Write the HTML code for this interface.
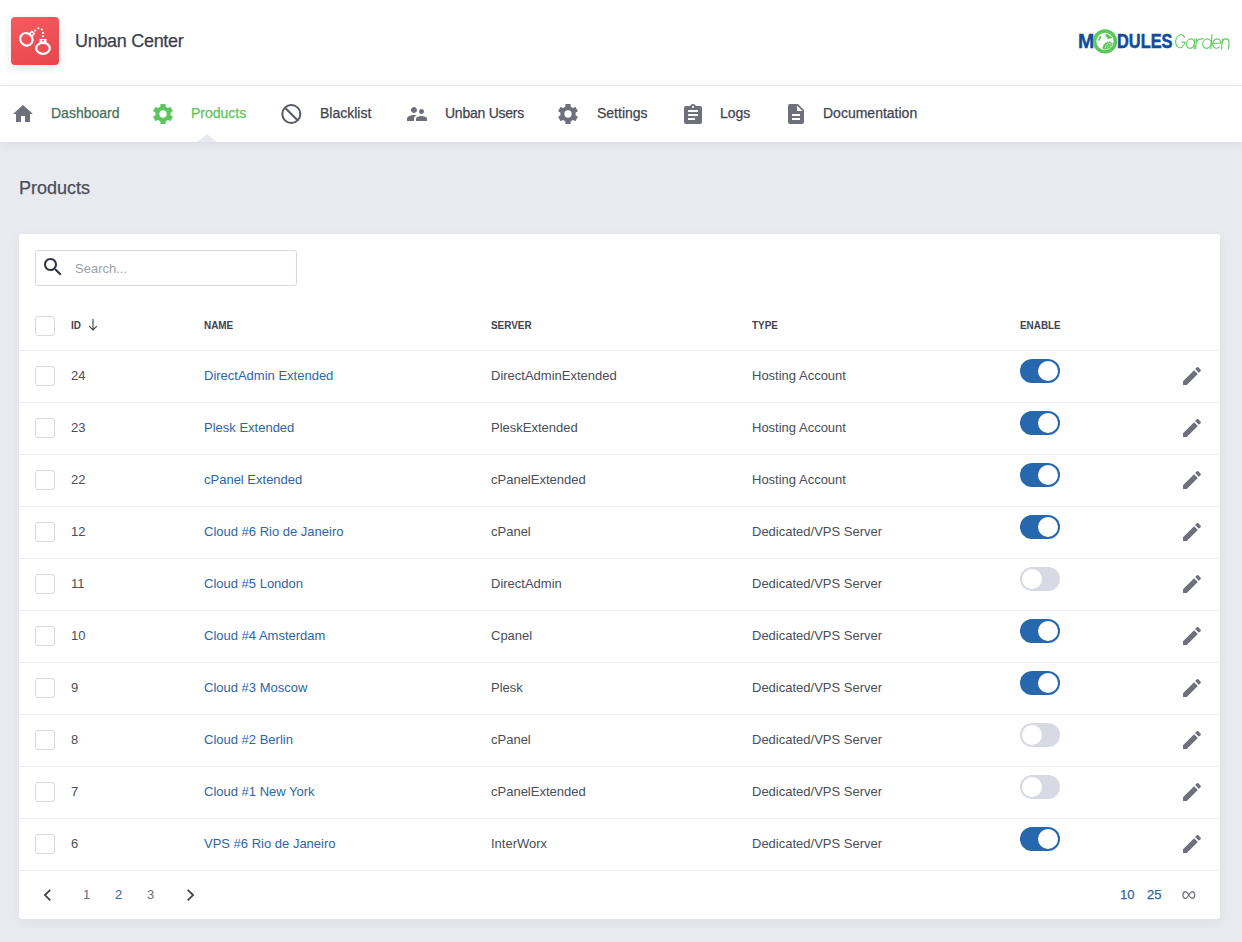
<!DOCTYPE html><html><head><meta charset="utf-8"><title>Unban Center</title><style>
*{box-sizing:border-box;margin:0;padding:0}
html,body{width:1242px;height:942px;overflow:hidden}
body{background:#e9eaef;font-family:"Liberation Sans",sans-serif;position:relative;color:#4a4e59}
.a{position:absolute;white-space:nowrap;line-height:1}
.hdr{position:absolute;left:0;top:0;width:1242px;height:85px;background:#fff}
.nav{position:absolute;left:0;top:85px;width:1242px;height:57px;background:#fff;border-top:1px solid #e8e9ee;box-shadow:0 2px 9px rgba(40,45,60,.07)}
.med{-webkit-text-stroke:0.25px currentColor}
.card{position:absolute;left:19px;top:234px;width:1201px;height:685px;background:#fff;border-radius:3px;box-shadow:0 3px 12px rgba(40,45,60,.06)}
.hline{position:absolute;left:19px;width:1201px;height:1px;background:#ebecf0}
.cb{position:absolute;left:35px;width:20px;height:20px;border:1px solid #d7dae4;border-radius:3px;background:#fff}
.th{font-size:11px;font-weight:700;color:#3f4350;transform:scaleX(.9);transform-origin:0 0}
.td{font-size:13px;color:#4a4e59}
.lnk{font-size:13px;color:#2d65a8}
.tg{position:absolute;left:1020px;width:40px;height:24px;border-radius:12px}
.tg.on{background:#2667ae}
.tg.off{background:#d8dae3}
.tg i{position:absolute;top:2px;width:20px;height:20px;border-radius:50%;background:#fff}
.tg.on i{left:18px}
.tg.off i{left:2px}
</style></head><body>
<div class="hdr"></div>
<div class="nav"></div>
<div class="a" style="left:11px;top:17px;width:48px;height:48px;border-radius:4px;background:linear-gradient(160deg,#f45b5f,#e7474b);box-shadow:0 3px 10px rgba(60,60,70,.12)"></div>
<svg class="a" style="left:11px;top:17px" width="48" height="48" viewBox="0 0 48 48"><g fill="none" stroke="#fff" stroke-width="2.2"><ellipse cx="15.4" cy="22.3" rx="6.5" ry="6.0" transform="rotate(50 15.4 22.3)"/><ellipse cx="32" cy="31.3" rx="6.8" ry="5.5"/></g><g fill="#fff"><rect x="18.5" y="14.3" width="4.8" height="4.8" transform="rotate(45 20.9 16.7)"/><rect x="28.6" y="21.9" width="6.9" height="3.9"/><circle cx="24" cy="13.5" r="1.05"/><circle cx="27.3" cy="11.25" r="1.05"/><circle cx="30.8" cy="12.5" r="1.05"/><circle cx="32" cy="15.9" r="1.05"/><circle cx="32" cy="19.3" r="1.05"/></g><circle cx="20.9" cy="16.7" r="1" fill="#ef5256"/><rect x="31.2" y="23" width="1.6" height="1.6" fill="#ef5256"/></svg>
<div class="a med" style="left:75px;top:31.76px;font-size:18px;color:#3b3f4b;letter-spacing:-0.3px">Unban Center</div>
<div class="a" style="left:1078px;top:31.89px;font-size:19.5px;font-weight:700;color:#0f4c9c;-webkit-text-stroke:.4px #0f4c9c">M</div>
<svg class="a" style="left:1092px;top:28px" width="26" height="27" viewBox="0 0 26 27"><circle cx="13" cy="13.4" r="10.4" fill="#fff" stroke="#5cc75c" stroke-width="3.5"/><g fill="#5cc75c"><path d="M7.6 7.9L9.1 8.6 8.7 10.6 7.2 12.9 6.2 12.3 6.6 10z"/><path d="M13.5 6.2L15.6 6 17.6 7.4 18.4 8.3 20.2 9.6 19.2 10.8 17.8 10.2 16.8 11.5 15.4 10.6 14.8 9 13.4 8.2z"/><path d="M10.4 20.4L10.8 18.6 11.4 17.6 11.3 16.4 12.6 16.1 13 14.6 14.5 14.7 15.3 13.4 16.7 14.1 18 13.2 18.7 14.5 20.7 14.8 20.2 17.2 18.5 19.7 15.9 21.1 12.8 21.5z"/></g><path d="M13.4 20.2A3.8 3.8 0 0 1 19.6 16.6M15.4 20.6A2.2 2.2 0 0 1 18.9 18.6" fill="none" stroke="#fff" stroke-width=".55"/></svg>
<div class="a" style="left:1117px;top:31.89px;font-size:19.5px;font-weight:700;color:#0f4c9c;-webkit-text-stroke:.5px #0f4c9c;transform:scaleX(.84);transform-origin:0 0">DULES</div>
<svg class="a" style="left:1170px;top:28px" width="66" height="26" viewBox="0 0 66 26"><g fill="none" stroke="#62c962" stroke-width="1.15" stroke-linecap="round" transform="translate(0 20.7) skewX(-5) translate(0 -20.7)"><path d="M13.6 9.2A4.75 6.6 0 1 0 14.45 14.3V14.1H11.3"/><ellipse cx="20" cy="15.6" rx="3.95" ry="4.7"/><path d="M24.05 10.9V20.7"/><path d="M25.65 20.7V10.9M25.65 15.2C25.9 12.2 28.5 10.7 32.3 10.9"/><ellipse cx="36.5" cy="15.6" rx="4.2" ry="4.7"/><path d="M40.8 6.6V20.7"/><path d="M41.95 15.2H50.4A4.1 4.7 0 1 0 49.2 18.9"/><path d="M51.55 20.7V10.9M51.55 15.3C51.55 12.4 53.2 10.8 55.1 10.8C57.1 10.8 58.5 12.4 58.5 15.3V20.7"/></g></svg>
<div class="a med" style="left:51px;top:106.05px;font-size:14px;color:#44705a">Dashboard</div>
<div class="a med" style="left:191px;top:106.05px;font-size:14px;color:#5cc45c">Products</div>
<div class="a med" style="left:320px;top:106.05px;font-size:14px;color:#3f4350">Blacklist</div>
<div class="a med" style="left:445px;top:106.05px;font-size:14px;color:#3f4350;letter-spacing:-0.25px">Unban Users</div>
<div class="a med" style="left:597px;top:106.05px;font-size:14px;color:#3f4350">Settings</div>
<div class="a med" style="left:720px;top:106.05px;font-size:14px;color:#3f4350">Logs</div>
<div class="a med" style="left:823px;top:106.05px;font-size:14px;color:#3f4350">Documentation</div>
<svg class="a" style="left:11px;top:102px" width="24" height="24" viewBox="0 0 24 24" fill="#6e717b"><path d="M10 20v-6h4v6h5v-8h3L12 3 2 12h3v8z"/></svg>
<svg class="a" style="left:153px;top:104px" width="20" height="20" viewBox="0 0 20 20"><g fill="#5cc65c"><circle cx="10" cy="10" r="7.7"/><rect x="7.4" y="0" width="5.2" height="20" transform="rotate(0 10 10)"/><rect x="7.4" y="0" width="5.2" height="20" transform="rotate(60 10 10)"/><rect x="7.4" y="0" width="5.2" height="20" transform="rotate(120 10 10)"/></g><circle cx="10" cy="10" r="3.65" fill="#fff"/></svg>
<svg class="a" style="left:281px;top:104px" width="21" height="20" viewBox="0 0 21 20"><circle cx="10.3" cy="10" r="9" fill="none" stroke="#555a66" stroke-width="2"/><line x1="4" y1="3.7" x2="16.6" y2="16.3" stroke="#555a66" stroke-width="2"/></svg>
<svg class="a" style="left:405px;top:102px" width="24" height="24" viewBox="0 0 24 24" fill="#6e717b"><path d="M16.5 12c1.38 0 2.49-1.12 2.49-2.5S17.88 7 16.5 7C15.12 7 14 8.12 14 9.5s1.12 2.5 2.5 2.5zM9 11c1.66 0 2.99-1.34 2.99-3S10.66 5 9 5C7.34 5 6 6.34 6 8s1.34 3 3 3zm7.5 3c-1.83 0-5.5.92-5.5 2.75V19h11v-2.25c0-1.83-3.670-2.75-5.5-2.75zM9 13c-2.33 0-7 1.17-7 3.5V19h7v-2.25c0-.85.33-2.34 2.37-3.47C10.5 13.1 9.66 13 9 13z"/></svg>
<svg class="a" style="left:558px;top:104px" width="20" height="20" viewBox="0 0 20 20"><g fill="#6e717b"><circle cx="10" cy="10" r="7.7"/><rect x="7.4" y="0" width="5.2" height="20" transform="rotate(0 10 10)"/><rect x="7.4" y="0" width="5.2" height="20" transform="rotate(60 10 10)"/><rect x="7.4" y="0" width="5.2" height="20" transform="rotate(120 10 10)"/></g><circle cx="10" cy="10" r="3.65" fill="#fff"/></svg>
<svg class="a" style="left:681px;top:103px" width="24" height="24" viewBox="0 0 24 24" fill="#6e717b"><path d="M19 3h-4.18C14.4 1.84 13.3 1 12 1c-1.3 0-2.4.84-2.82 2H5c-1.1 0-2 .9-2 2v14c0 1.1.9 2 2 2h14c1.1 0 2-.9 2-2V5c0-1.1-.9-2-2-2zm-7 0c.55 0 1 .45 1 1s-.45 1-1 1-1-.45-1-1 .45-1 1-1zm2 14H7v-2h7v2zm3-4H7v-2h10v2zm0-4H7V7h10v2z"/></svg>
<svg class="a" style="left:784px;top:102px" width="24" height="24" viewBox="0 0 24 24" fill="#6e717b"><path d="M14 2H6c-1.1 0-1.99.9-1.99 2L4 20c0 1.1.89 2 1.99 2H18c1.1 0 2-.9 2-2V8l-6-6zm2 16H8v-2h8v2zm0-4H8v-2h8v2zm-3-5V3.5L18.5 9H13z"/></svg>
<div class="a" style="left:197px;top:134px;width:0;height:0;border-left:10px solid transparent;border-right:10px solid transparent;border-bottom:8px solid #e9eaef"></div>
<div class="a med" style="left:19px;top:178.66px;font-size:18px;color:#4a4e58">Products</div>
<div class="card"></div>
<div class="a" style="left:35px;top:250px;width:262px;height:36px;border:1px solid #d6d9e1;border-radius:3px;background:#fff"></div>
<svg class="a" style="left:41px;top:255px" width="24" height="24" viewBox="0 0 24 24" fill="#2f3340"><path d="M15.5 14h-.79l-.28-.27C15.41 12.59 16 11.11 16 9.5 16 5.91 13.09 3 9.5 3S3 5.91 3 9.5 5.91 16 9.5 16c1.61 0 3.09-.59 4.23-1.57l.27.28v.79l5 4.99L20.49 19l-4.99-5zm-6 0C7.01 14 5 11.99 5 9.5S7.01 5 9.5 5 14 7.01 14 9.5 11.99 14 9.5 14z"/></svg>
<div class="a" style="left:75px;top:261.9px;font-size:13px;color:#9ba0ad">Search...</div>
<div class="cb" style="top:316px"></div>
<div class="a th" style="left:71px;top:319.59px">ID</div>
<div class="a th" style="left:204px;top:319.59px">NAME</div>
<div class="a th" style="left:491px;top:319.59px">SERVER</div>
<div class="a th" style="left:752px;top:319.59px">TYPE</div>
<div class="a th" style="left:1020px;top:319.59px">ENABLE</div>
<svg class="a" style="left:88px;top:318px" width="10" height="13" viewBox="0 0 10 13"><path d="M5 1v11M1.2 8.2L5 12l3.8-3.8" fill="none" stroke="#3f4350" stroke-width="1.1"/></svg>
<div class="hline" style="top:350px"></div>
<div class="cb" style="top:366px"></div>
<div class="a td" style="left:71px;top:368.6px">24</div>
<div class="a lnk" style="left:204px;top:368.6px">DirectAdmin Extended</div>
<div class="a td" style="left:491px;top:368.6px">DirectAdminExtended</div>
<div class="a td" style="left:752px;top:368.6px">Hosting Account</div>
<div class="tg on" style="top:359px"><i></i></div>
<svg class="a" style="left:1179.5px;top:364px" width="24" height="24" viewBox="0 0 24 24" fill="#6e717b"><path d="M3 17.25V21h3.75L17.81 9.94l-3.75-3.75L3 17.25zM20.71 7.04c.39-.39.39-1.02 0-1.41l-2.34-2.34c-.39-.39-1.02-.39-1.41 0l-1.83 1.83 3.75 3.75 1.83-1.83z"/></svg>
<div class="hline" style="top:402px"></div>
<div class="cb" style="top:418px"></div>
<div class="a td" style="left:71px;top:420.6px">23</div>
<div class="a lnk" style="left:204px;top:420.6px">Plesk Extended</div>
<div class="a td" style="left:491px;top:420.6px">PleskExtended</div>
<div class="a td" style="left:752px;top:420.6px">Hosting Account</div>
<div class="tg on" style="top:411px"><i></i></div>
<svg class="a" style="left:1179.5px;top:416px" width="24" height="24" viewBox="0 0 24 24" fill="#6e717b"><path d="M3 17.25V21h3.75L17.81 9.94l-3.75-3.75L3 17.25zM20.71 7.04c.39-.39.39-1.02 0-1.41l-2.34-2.34c-.39-.39-1.02-.39-1.41 0l-1.83 1.83 3.75 3.75 1.83-1.83z"/></svg>
<div class="hline" style="top:454px"></div>
<div class="cb" style="top:470px"></div>
<div class="a td" style="left:71px;top:472.6px">22</div>
<div class="a lnk" style="left:204px;top:472.6px">cPanel Extended</div>
<div class="a td" style="left:491px;top:472.6px">cPanelExtended</div>
<div class="a td" style="left:752px;top:472.6px">Hosting Account</div>
<div class="tg on" style="top:463px"><i></i></div>
<svg class="a" style="left:1179.5px;top:468px" width="24" height="24" viewBox="0 0 24 24" fill="#6e717b"><path d="M3 17.25V21h3.75L17.81 9.94l-3.75-3.75L3 17.25zM20.71 7.04c.39-.39.39-1.02 0-1.41l-2.34-2.34c-.39-.39-1.02-.39-1.41 0l-1.83 1.83 3.75 3.75 1.83-1.83z"/></svg>
<div class="hline" style="top:506px"></div>
<div class="cb" style="top:522px"></div>
<div class="a td" style="left:71px;top:524.6px">12</div>
<div class="a lnk" style="left:204px;top:524.6px">Cloud #6 Rio de Janeiro</div>
<div class="a td" style="left:491px;top:524.6px">cPanel</div>
<div class="a td" style="left:752px;top:524.6px">Dedicated/VPS Server</div>
<div class="tg on" style="top:515px"><i></i></div>
<svg class="a" style="left:1179.5px;top:520px" width="24" height="24" viewBox="0 0 24 24" fill="#6e717b"><path d="M3 17.25V21h3.75L17.81 9.94l-3.75-3.75L3 17.25zM20.71 7.04c.39-.39.39-1.02 0-1.41l-2.34-2.34c-.39-.39-1.02-.39-1.41 0l-1.83 1.83 3.75 3.75 1.83-1.83z"/></svg>
<div class="hline" style="top:558px"></div>
<div class="cb" style="top:574px"></div>
<div class="a td" style="left:71px;top:576.6px">11</div>
<div class="a lnk" style="left:204px;top:576.6px">Cloud #5 London</div>
<div class="a td" style="left:491px;top:576.6px">DirectAdmin</div>
<div class="a td" style="left:752px;top:576.6px">Dedicated/VPS Server</div>
<div class="tg off" style="top:567px"><i></i></div>
<svg class="a" style="left:1179.5px;top:572px" width="24" height="24" viewBox="0 0 24 24" fill="#6e717b"><path d="M3 17.25V21h3.75L17.81 9.94l-3.75-3.75L3 17.25zM20.71 7.04c.39-.39.39-1.02 0-1.41l-2.34-2.34c-.39-.39-1.02-.39-1.41 0l-1.83 1.83 3.75 3.75 1.83-1.83z"/></svg>
<div class="hline" style="top:610px"></div>
<div class="cb" style="top:626px"></div>
<div class="a td" style="left:71px;top:628.6px">10</div>
<div class="a lnk" style="left:204px;top:628.6px">Cloud #4 Amsterdam</div>
<div class="a td" style="left:491px;top:628.6px">Cpanel</div>
<div class="a td" style="left:752px;top:628.6px">Dedicated/VPS Server</div>
<div class="tg on" style="top:619px"><i></i></div>
<svg class="a" style="left:1179.5px;top:624px" width="24" height="24" viewBox="0 0 24 24" fill="#6e717b"><path d="M3 17.25V21h3.75L17.81 9.94l-3.75-3.75L3 17.25zM20.71 7.04c.39-.39.39-1.02 0-1.41l-2.34-2.34c-.39-.39-1.02-.39-1.41 0l-1.83 1.83 3.75 3.75 1.83-1.83z"/></svg>
<div class="hline" style="top:662px"></div>
<div class="cb" style="top:678px"></div>
<div class="a td" style="left:71px;top:680.6px">9</div>
<div class="a lnk" style="left:204px;top:680.6px">Cloud #3 Moscow</div>
<div class="a td" style="left:491px;top:680.6px">Plesk</div>
<div class="a td" style="left:752px;top:680.6px">Dedicated/VPS Server</div>
<div class="tg on" style="top:671px"><i></i></div>
<svg class="a" style="left:1179.5px;top:676px" width="24" height="24" viewBox="0 0 24 24" fill="#6e717b"><path d="M3 17.25V21h3.75L17.81 9.94l-3.75-3.75L3 17.25zM20.71 7.04c.39-.39.39-1.02 0-1.41l-2.34-2.34c-.39-.39-1.02-.39-1.41 0l-1.83 1.83 3.75 3.75 1.83-1.83z"/></svg>
<div class="hline" style="top:714px"></div>
<div class="cb" style="top:730px"></div>
<div class="a td" style="left:71px;top:732.6px">8</div>
<div class="a lnk" style="left:204px;top:732.6px">Cloud #2 Berlin</div>
<div class="a td" style="left:491px;top:732.6px">cPanel</div>
<div class="a td" style="left:752px;top:732.6px">Dedicated/VPS Server</div>
<div class="tg off" style="top:723px"><i></i></div>
<svg class="a" style="left:1179.5px;top:728px" width="24" height="24" viewBox="0 0 24 24" fill="#6e717b"><path d="M3 17.25V21h3.75L17.81 9.94l-3.75-3.75L3 17.25zM20.71 7.04c.39-.39.39-1.02 0-1.41l-2.34-2.34c-.39-.39-1.02-.39-1.41 0l-1.83 1.83 3.75 3.75 1.83-1.83z"/></svg>
<div class="hline" style="top:766px"></div>
<div class="cb" style="top:782px"></div>
<div class="a td" style="left:71px;top:784.6px">7</div>
<div class="a lnk" style="left:204px;top:784.6px">Cloud #1 New York</div>
<div class="a td" style="left:491px;top:784.6px">cPanelExtended</div>
<div class="a td" style="left:752px;top:784.6px">Dedicated/VPS Server</div>
<div class="tg off" style="top:775px"><i></i></div>
<svg class="a" style="left:1179.5px;top:780px" width="24" height="24" viewBox="0 0 24 24" fill="#6e717b"><path d="M3 17.25V21h3.75L17.81 9.94l-3.75-3.75L3 17.25zM20.71 7.04c.39-.39.39-1.02 0-1.41l-2.34-2.34c-.39-.39-1.02-.39-1.41 0l-1.83 1.83 3.75 3.75 1.83-1.83z"/></svg>
<div class="hline" style="top:818px"></div>
<div class="cb" style="top:834px"></div>
<div class="a td" style="left:71px;top:836.6px">6</div>
<div class="a lnk" style="left:204px;top:836.6px">VPS #6 Rio de Janeiro</div>
<div class="a td" style="left:491px;top:836.6px">InterWorx</div>
<div class="a td" style="left:752px;top:836.6px">Dedicated/VPS Server</div>
<div class="tg on" style="top:827px"><i></i></div>
<svg class="a" style="left:1179.5px;top:832px" width="24" height="24" viewBox="0 0 24 24" fill="#6e717b"><path d="M3 17.25V21h3.75L17.81 9.94l-3.75-3.75L3 17.25zM20.71 7.04c.39-.39.39-1.02 0-1.41l-2.34-2.34c-.39-.39-1.02-.39-1.41 0l-1.83 1.83 3.75 3.75 1.83-1.83z"/></svg>
<div class="hline" style="top:870px"></div>
<svg class="a" style="left:42px;top:888px" width="11" height="14" viewBox="0 0 11 14"><path d="M8.3 1.9L2.9 7.1l5.4 5.3" fill="none" stroke="#3d3f4c" stroke-width="1.75"/></svg>
<svg class="a" style="left:185px;top:888px" width="11" height="14" viewBox="0 0 11 14"><path d="M2.7 1.9L8.1 7.1l-5.4 5.3" fill="none" stroke="#3d3f4c" stroke-width="1.75"/></svg>
<div class="a td" style="left:83px;top:888.3px;color:#6b6f7b">1</div>
<div class="a lnk" style="left:115px;top:888.3px">2</div>
<div class="a td" style="left:147px;top:888.3px;color:#6b6f7b">3</div>
<div class="a lnk med" style="left:1120px;top:888.3px">10</div>
<div class="a lnk med" style="left:1147px;top:888.3px">25</div>
<svg class="a" style="left:1181.5px;top:890px" width="14" height="10" viewBox="0 0 15 10" preserveAspectRatio="none"><path d="M7.3 5C5.8 2.6 4.6 1.6 3.5 1.6 1.9 1.6 1 3.1 1 5s.9 3.4 2.5 3.4c1.1 0 2.3-1 3.8-3.4 1.5-2.4 2.7-3.4 3.8-3.4C12.7 1.6 13.6 3.1 13.6 5s-.9 3.4-2.5 3.4c-1.1 0-2.3-1-3.8-3.4z" fill="none" stroke="#6e717b" stroke-width="1.25"/></svg>
</body></html>
